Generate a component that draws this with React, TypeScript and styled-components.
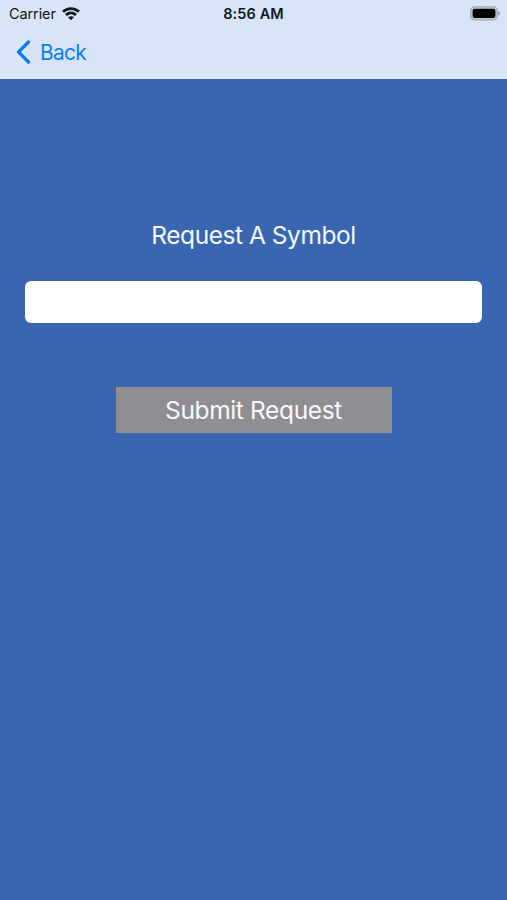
import React, { useState } from 'react';
import styled, { createGlobalStyle } from 'styled-components';

const GlobalStyle = createGlobalStyle`
  *, *::before, *::after { box-sizing: border-box; }
  body { margin: 0; font-family: Inter, "Liberation Sans", sans-serif; }
`;

const Screen = styled.div`
  display: flex;
  flex-direction: column;
  min-height: 100vh;
  background: #3a66b1;
`;

const Header = styled.header`
  height: 79px;
  background: #d8e5f6;
`;

const StatusBar = styled.div`
  display: grid;
  grid-template-columns: 1fr auto 1fr;
  align-items: center;
  height: 27px;
  padding: 0 6px;
  color: #101820;
`;

const Carrier = styled.div`
  display: flex;
  align-items: center;
  gap: 6px;
  padding-left: 3px;
  font-size: 14.5px;
  line-height: 20px;
  letter-spacing: -0.1px;
`;

const Time = styled.time`
  font-size: 14.5px;
  line-height: 20px;
  font-weight: 600;
  letter-spacing: 0.12px;
`;

const Battery = styled.svg`
  justify-self: end;
`;

const BackButton = styled.button`
  display: flex;
  align-items: center;
  gap: 9px;
  height: 50px;
  margin-left: 16px;
  padding: 0;
  border: 0;
  background: none;
  color: #0a7cf8;
  font: 400 20.8px/28px Inter, "Liberation Sans", sans-serif;
  letter-spacing: -0.6px;
`;

const BackLabel = styled.span`
  padding-top: 2px;
`;

const Form = styled.form`
  display: flex;
  flex-direction: column;
  align-items: center;
  padding: 140px 25px 0;
`;

const Title = styled.label`
  height: 62px;
  color: #f4f8ff;
  font-size: 24.5px;
  line-height: 32px;
  letter-spacing: -0.46px;
`;

const SymbolInput = styled.input`
  width: 457px;
  height: 42px;
  padding: 0 9px;
  border: 0;
  border-radius: 6px;
  outline: 0;
  background: #fff;
  font: 400 20px Inter, sans-serif;
`;

const SubmitButton = styled.button`
  width: 276px;
  height: 46px;
  margin-top: 64px;
  padding: 0;
  border: 0;
  background: #8e8e93;
  color: #f8f8fb;
  font: 400 24.5px/46px Inter, "Liberation Sans", sans-serif;
  letter-spacing: -0.36px;
`;

export default function App() {
  const [symbol, setSymbol] = useState('');
  return (
    <Screen>
      <GlobalStyle />
      <Header>
        <StatusBar>
          <Carrier>
            <span>Carrier</span>
            <svg width="18" height="14" viewBox="0 0 18 14" fill="none" stroke="currentColor" strokeWidth="2.8">
              <path d="M1 4.8C5.6 .5 12.4 .5 17 4.8" />
              <path d="M4 8C6.9 5.3 11.1 5.3 14 8" />
              <path d="M9 13.2L6.1 10.3C7.7 8.8 10.3 8.8 11.9 10.3Z" fill="currentColor" stroke="none" />
            </svg>
          </Carrier>
          <Time>8:56 AM</Time>
          <Battery width="31" height="15" viewBox="0 0 31 15">
            <rect x="0.8" y="0.9" width="26.4" height="13" rx="4" fill="#c3ccd8" stroke="#a0a8b3" strokeWidth="1.3" />
            <rect x="2.6" y="2.8" width="22.8" height="9.2" rx="2" fill="#000" />
            <path d="M28.4 5.2C30.6 5.8 30.6 9 28.4 9.6Z" fill="#8f98a4" />
          </Battery>
        </StatusBar>
        <BackButton type="button">
          <svg width="15" height="24" viewBox="0 0 15 24" fill="none" stroke="currentColor" strokeWidth="3.2" strokeLinecap="round" strokeLinejoin="round">
            <path d="M12.5 2L2.5 12L12.5 22" />
          </svg>
          <BackLabel>Back</BackLabel>
        </BackButton>
      </Header>
      <Form onSubmit={(event) => event.preventDefault()}>
        <Title htmlFor="symbol">Request A Symbol</Title>
        <SymbolInput id="symbol" value={symbol} onChange={(event) => setSymbol(event.target.value)} />
        <SubmitButton type="submit">Submit Request</SubmitButton>
      </Form>
    </Screen>
  );
}
